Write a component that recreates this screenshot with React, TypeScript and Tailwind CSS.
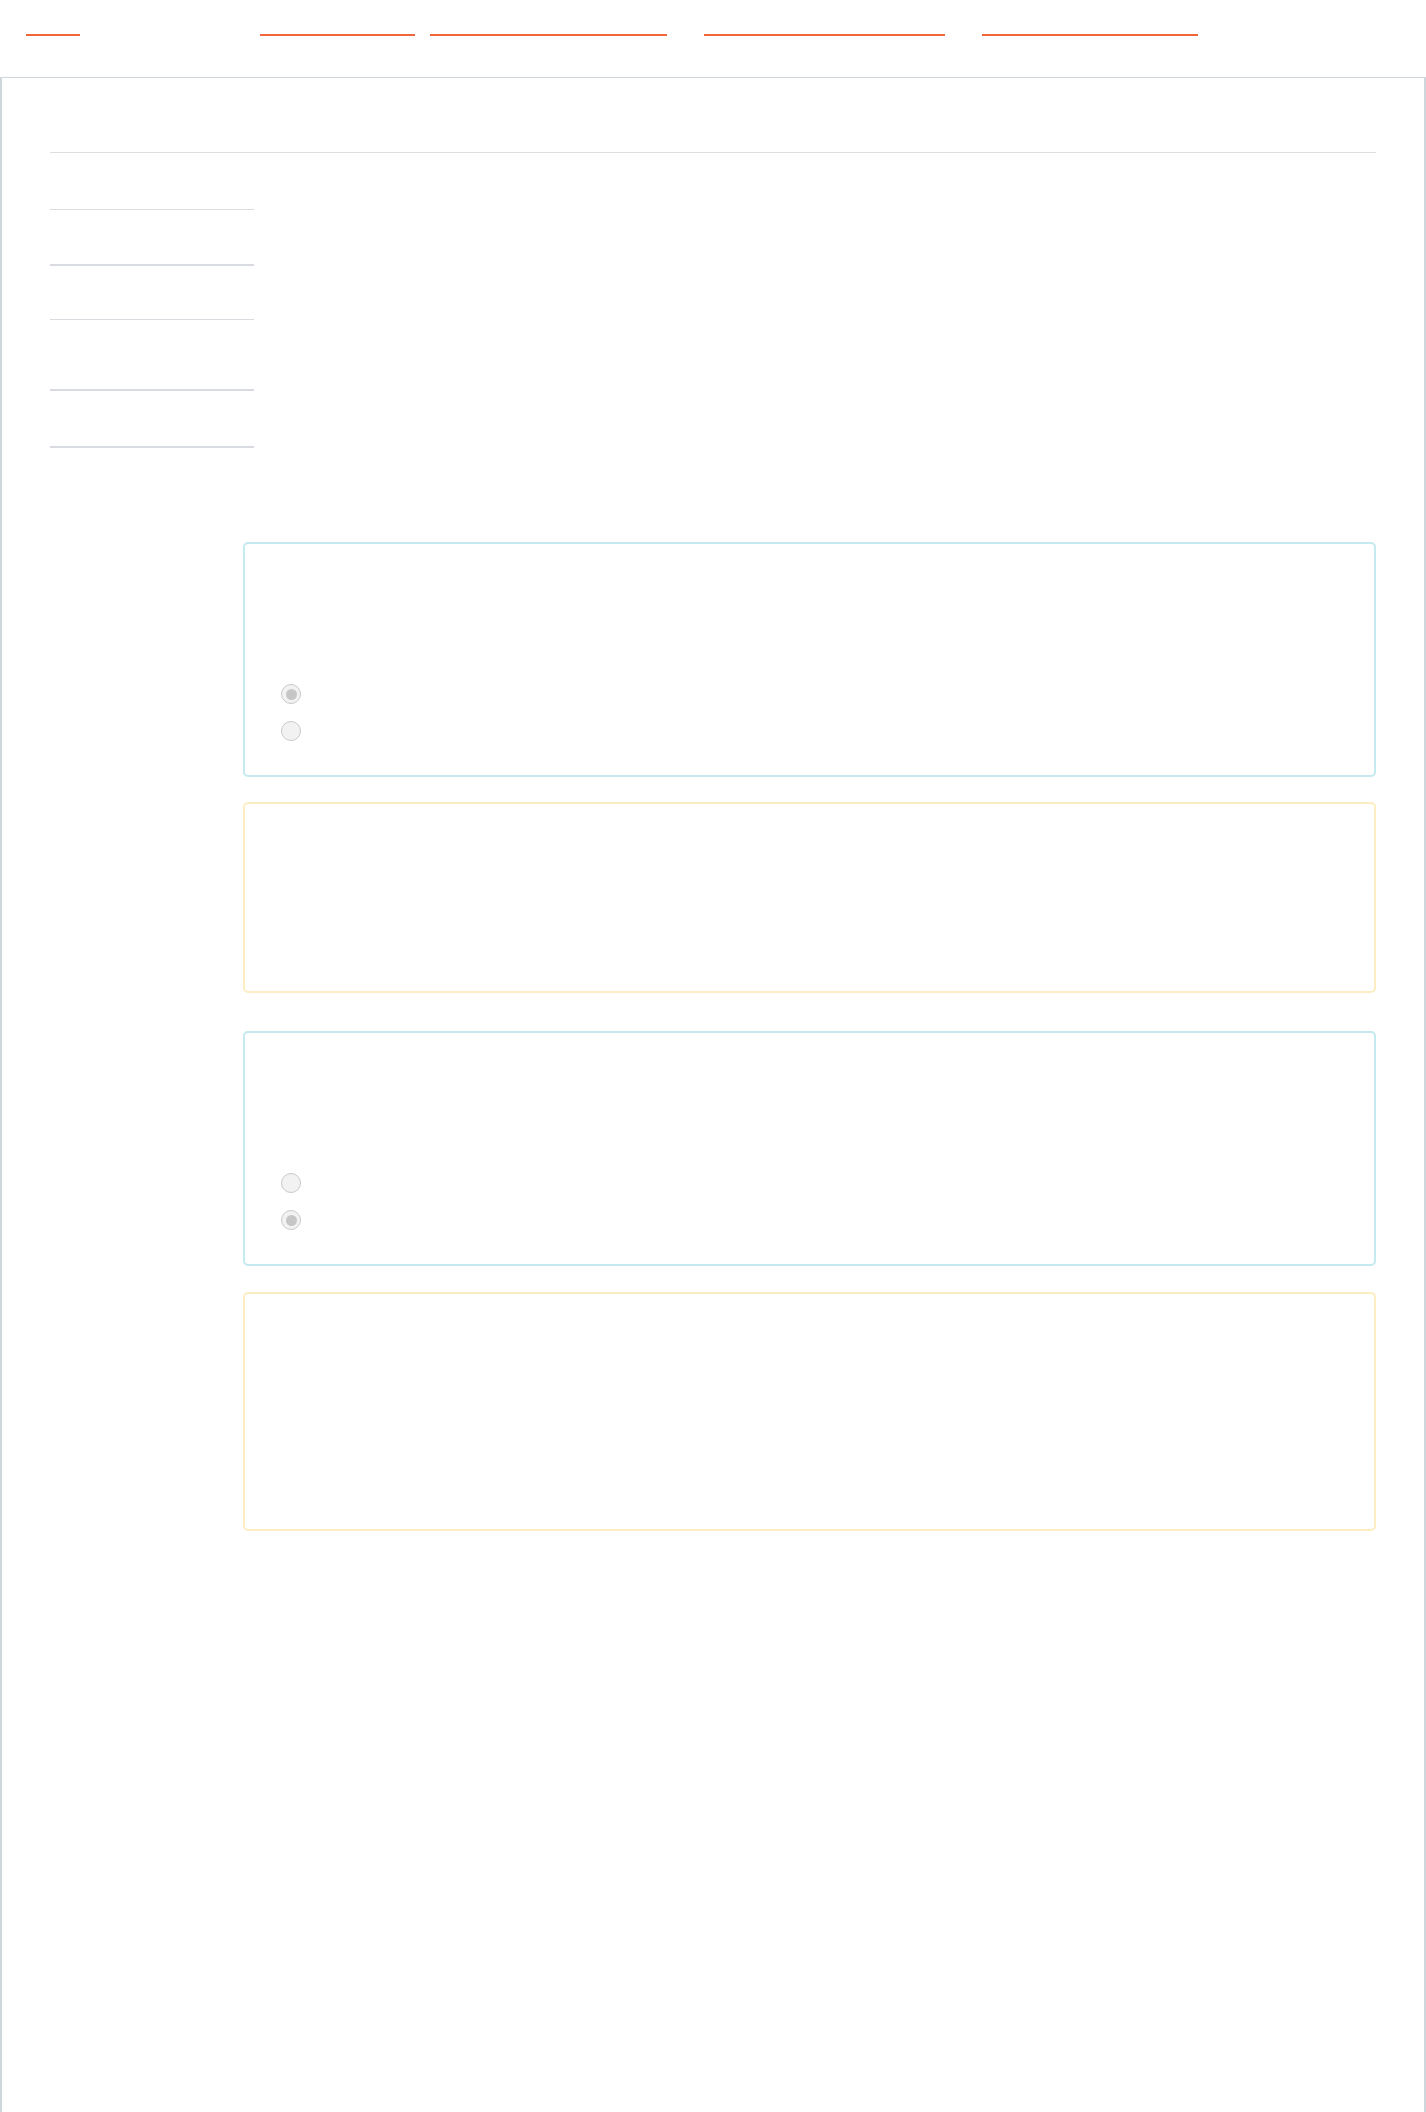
const navLinks = [
  { ml: "ml-[26px]", w: "w-[54px]" },
  { ml: "ml-[180px]", w: "w-[155px]" },
  { ml: "ml-[15px]", w: "w-[237px]" },
  { ml: "ml-[37px]", w: "w-[241px]" },
  { ml: "ml-[37px]", w: "w-[216px]" },
];

function Radio({ checked }: { checked?: boolean }) {
  return (
    <div className="w-[20px] h-[20px] rounded-full border-[1.5px] border-[#c9c9c9] bg-[#f2f2f2] flex items-center justify-center">
      {checked && <div className="w-[11px] h-[11px] rounded-full bg-[#c6c6c6]" />}
    </div>
  );
}

function ChoiceCard({ first }: { first: boolean }) {
  return (
    <div className="h-[235px] rounded-[5px] border-2 border-[#c4e9ef] bg-white pl-[36px] pt-[140px]">
      <div className="flex flex-col gap-[17px]">
        <Radio checked={first} />
        <Radio checked={!first} />
      </div>
    </div>
  );
}

function NoteCard({ tall }: { tall: boolean }) {
  return (
    <div
      className={
        tall
          ? "h-[239px] rounded-[5px] border-2 border-[#fdedc3] bg-white"
          : "h-[191px] rounded-[5px] border-2 border-[#fdedc3] bg-white"
      }
    />
  );
}

export default function App() {
  return (
    <div className="min-h-screen bg-white font-['Liberation_Sans',sans-serif]">
      {/* Top nav */}
      <header className="h-[77px] pt-[34px] flex items-start">
        {navLinks.map((l, i) => (
          <div key={i} className={`${l.ml} ${l.w} h-[2px] bg-[#f0673b]`} />
        ))}
      </header>

      <div className="min-h-[2035px] border-t border-l-2 border-r-2 border-[#cdd7dc] px-[48px] pt-[74px]">
        <div className="h-px bg-[#dedee1]" />

        {/* Sidebar list */}
        <div className="w-[204px]">
          <div className="h-[57px] border-b border-[#dcdde1]" />
          <div className="h-[56px] border-b-2 border-[#d8dce1]" />
          <div className="h-[54px] border-b border-[#dadce1]" />
          <div className="h-[71px] border-b-2 border-[#d8dce1]" />
          <div className="h-[57px] border-b-2 border-[#d8dce1]" />
        </div>

        {/* Questions */}
        <div className="ml-[193px] mt-[94px] flex flex-col">
          <ChoiceCard first />
          <div className="mt-[25px]">
            <NoteCard tall={false} />
          </div>
          <div className="mt-[38px]">
            <ChoiceCard first={false} />
          </div>
          <div className="mt-[26px]">
            <NoteCard tall />
          </div>
        </div>
      </div>
    </div>
  );
}
